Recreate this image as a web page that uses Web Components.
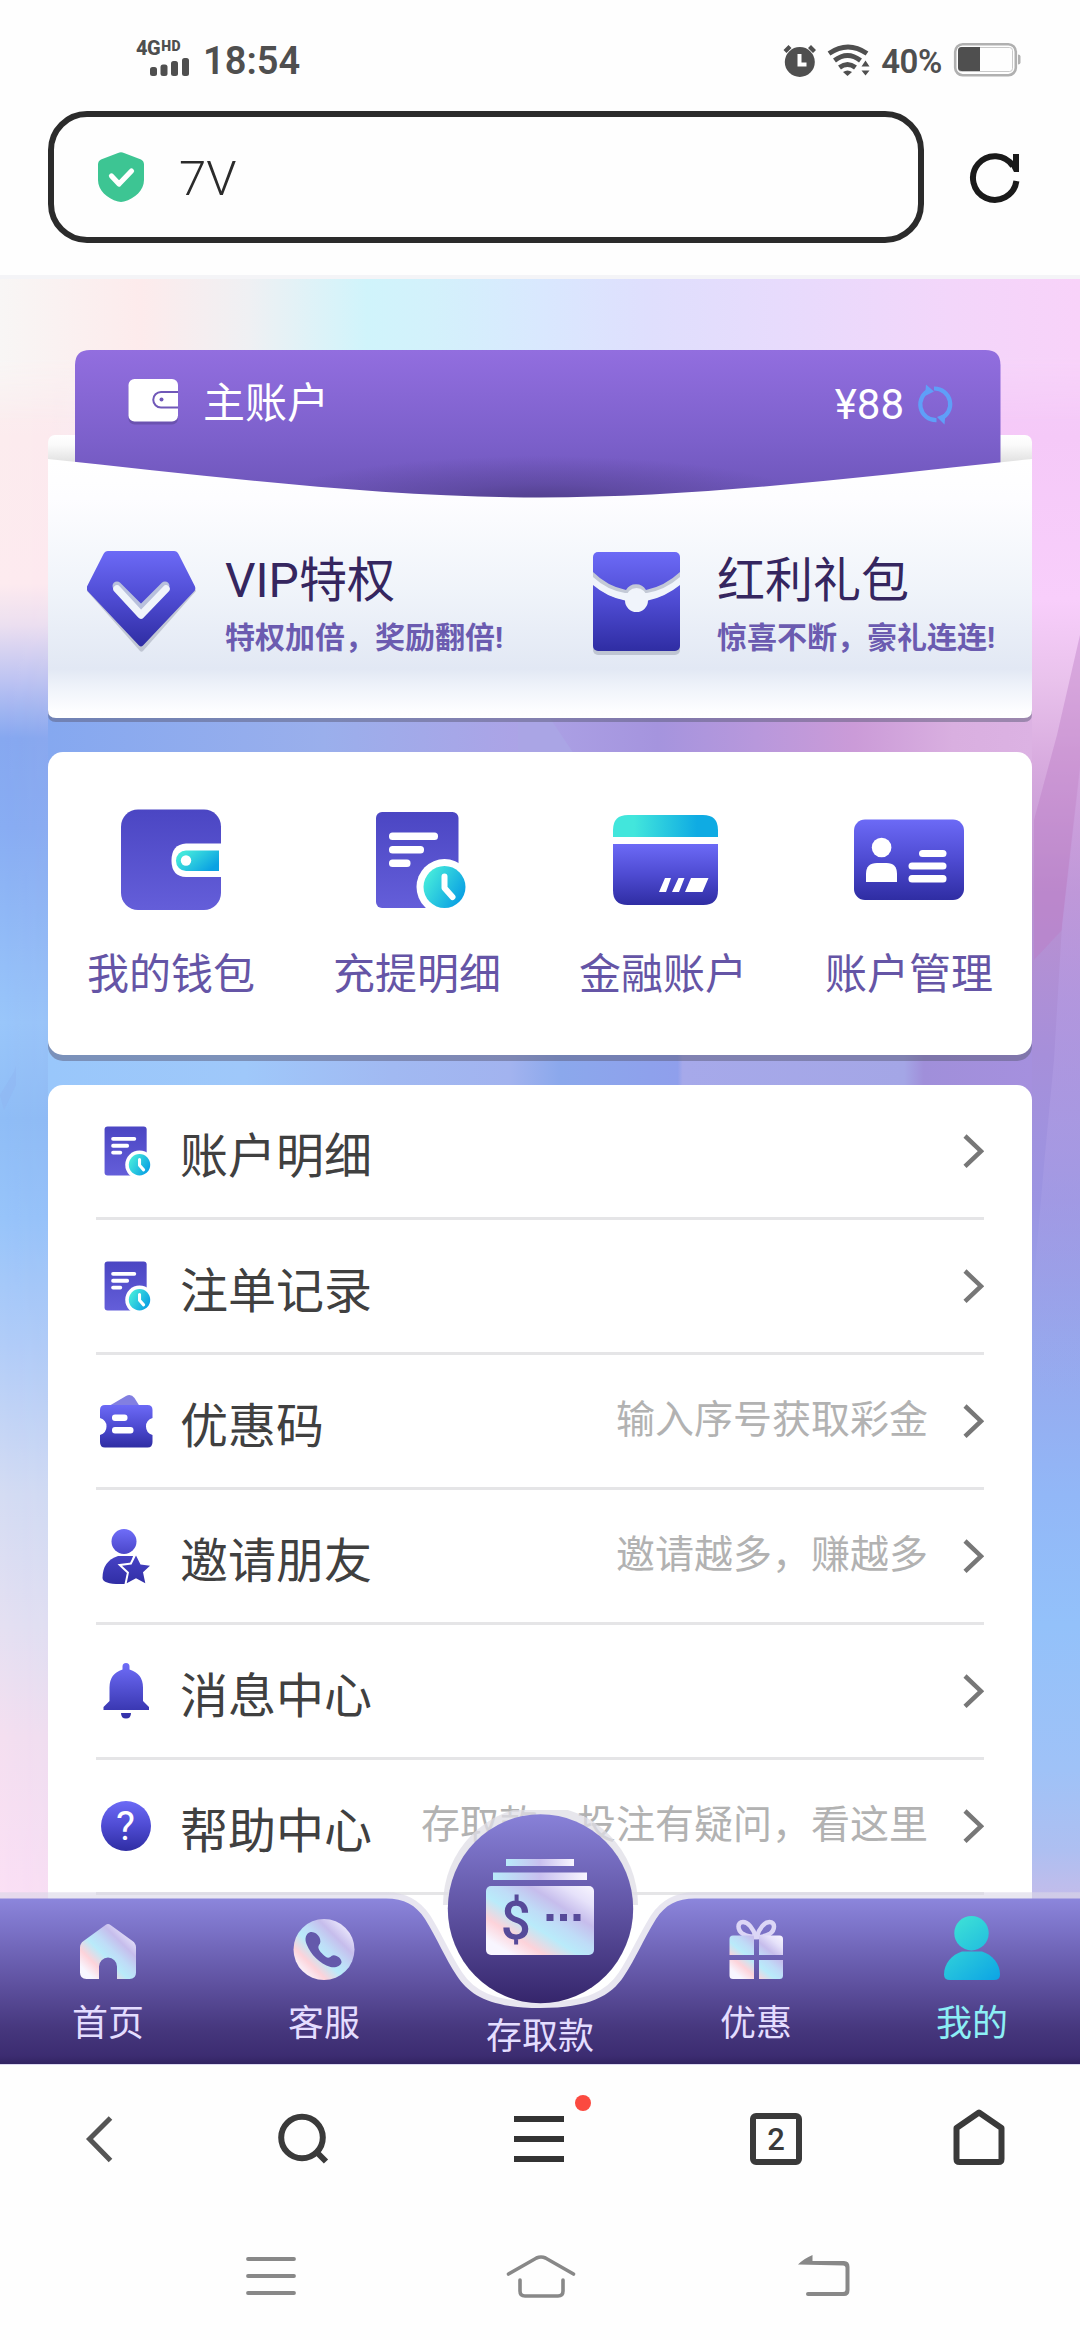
<!DOCTYPE html>
<html lang="zh-CN">
<head>
<meta charset="utf-8">
<title>7V</title>
<style>
html,body{margin:0;padding:0;background:#fff}
body{width:1080px;height:2340px;overflow:hidden;font-family:Roboto,"Noto Sans CJK SC",sans-serif}
</style>
</head>
<body>
<phone-screen></phone-screen>
<script>
const HOLO = `<linearGradient id="h" x1="0" y1="1" x2="1" y2="0"><stop offset="0" stop-color="#f8f6ff"/><stop offset=".12" stop-color="#f8f6ff"/><stop offset=".27" stop-color="#fdd3da"/><stop offset=".43" stop-color="#b9ebfa"/><stop offset=".55" stop-color="#bfdcf7"/><stop offset=".7" stop-color="#c6bdec"/><stop offset=".85" stop-color="#e6e2fa"/><stop offset="1" stop-color="#f8f6ff"/></linearGradient>`;
const BLUE = `<linearGradient id="b" x1="0" y1="0" x2="0" y2="1"><stop offset="0" stop-color="#6c6af6"/><stop offset=".5" stop-color="#4e4bd2"/><stop offset="1" stop-color="#2f2da3"/></linearGradient>`;
const INDIGO = `<linearGradient id="i" x1="0" y1="0" x2="0" y2="1"><stop offset="0" stop-color="#4b46c3"/><stop offset="1" stop-color="#645ed9"/></linearGradient>`;
const TEAL = `<linearGradient id="t" x1="0" y1="0" x2="1" y2=".6"><stop offset="0" stop-color="#47eddb"/><stop offset=".2" stop-color="#42e6dc"/><stop offset="1" stop-color="#0ba2e3"/></linearGradient>`;
const DOC = `<rect x="376" y="812" width="82.500" height="96" rx="6" fill="url(#i)"/><g fill="#fff"><rect x="389" y="832.500" width="49" height="7.500" rx="3.500"/><rect x="389" y="846" width="35" height="7.500" rx="3.500"/><rect x="389" y="859.500" width="21.500" height="7.500" rx="3.500"/><circle cx="444.500" cy="887" r="28"/></g><circle cx="444.500" cy="887" r="21" fill="url(#t)"/><path d="M444.500 876.500V888l8 9" fill="none" stroke="#fff" stroke-width="6" stroke-linecap="round" stroke-linejoin="round"/>`;

/* name: [width, height, viewBox, markup] */
const ICONS = {
  signal:[40,20,'150 57 40 20',`<g fill="#4f4f4f"><rect x="150" y="67" width="7" height="9" rx="2.500"/><rect x="160.500" y="64.500" width="7" height="11.500" rx="2.500"/><rect x="171" y="61" width="7" height="15" rx="2.500"/><rect x="182" y="58" width="7" height="18" rx="2.500"/></g>`],
  alarm:[34,36,'781 43 34 36',`<g fill="#4f4f4f"><circle cx="797.800" cy="62" r="15"/><path d="M781.500 50l5-5 3 3-5 5zM814 50l-5-5-3 3 5 5z"/></g><path d="M797.500 54v10.500h7" fill="none" stroke="#fff" stroke-width="4"/>`],
  wifi:[44,34,'825 43 44 34',`<g fill="none" stroke="#4f4f4f" stroke-width="4.800"><path d="M827 53.500q19-13 38 0"/><path d="M832.500 60.500q13-10 26 0"/><path d="M837.500 67.500q8-6 16 0"/></g><path d="M841 72q4.500-3 9 0l-4.500 4z" fill="#4f4f4f"/><path d="M863.500 60.500l4 6h-8zM863.500 75.500l4-5h-8z" fill="#4f4f4f"/>`],
  battery:[68,36,'953 42 68 36',`<rect x="955.200" y="44.200" width="60.600" height="31" rx="7.500" fill="none" stroke="#b0b0b0" stroke-width="2.600"/><rect x="958.500" y="47.500" width="54" height="24" rx="3" fill="none" stroke="#c9c9c9" stroke-width="1"/><path d="M980 47h-18.500a3.500 3.500 0 0 0-3.500 3.500v17a3.500 3.500 0 0 0 3.500 3.500H980z" fill="#4f4f4f"/><path d="M1018 54.500q2.500 0 2.500 2v6q0 2-2.500 2z" fill="#b0b0b0"/>`],
  shield:[46,50,'98 152 46 50',`<path d="M118 153q3-1.300 6 0l17 6.500q3 1.500 3 5v15.500c0 10-9 18.500-20 21.500q-3 .8-6 0c-11-3-20-11.500-20-21.500V164.500q0-3.500 3-5z" fill="#3dc593"/><path d="M111.500 176l7.500 8 12.500-13" fill="none" stroke="#fff" stroke-width="5.200" stroke-linecap="round" stroke-linejoin="round"/>`],
  reload:[52,52,'969 151 52 52',`<path d="M1013 166a21.800 21.800 0 1 0 3.400 15" fill="none" stroke="#1a1a1a" stroke-width="6"/><path d="M1013 154h6v18h-5l-3-6 2-2z" fill="#1a1a1a"/>`],
  purse:[50,48,'128 380 50 48',`<rect x="128.500" y="384" width="49.500" height="42.500" rx="6" fill="#594598" opacity=".55"/><rect x="128.500" y="381" width="49.500" height="42.500" rx="6" fill="#fff"/><path d="M178 394h-17a7.500 7.500 0 0 0 0 15.500h17" fill="#fff" stroke="#7058b8" stroke-width="2"/><circle cx="161.500" cy="401.500" r="2" fill="#7058b8"/>`],
  sync:[38,42,'916 385 38 42',`<g fill="none" stroke="#5f9ff8" stroke-width="4.200"><path d="M930 391a15.700 15.700 0 0 0 6.500 30.200"/><path d="M934 389.500a15.700 15.700 0 0 1 6.500 30.200"/></g><path d="M926 385.500l8 7-9 4.500zM944.500 425.500l-7.500-7.500 8.500-3.500z" fill="#5f9ff8"/>`],
  gem:[110,104,'87 550 110 104',BLUE+`<path d="M105 555h72l19 36-53 60q-1.500 1.500-3 0l-53-60z" fill="#9a9fb0" opacity=".5"/><path d="M108 551h66q3 0 4.500 3L195 586.500q1 3-1 5L143 645.500q-2 1.800-4 0L88 591.500q-2-2-1-5L103.500 554q1.500-3 4.500-3z" fill="url(#b)"/><path d="M117 586l24 24 24-24" fill="none" stroke="#b8c0dc" stroke-width="9" stroke-linecap="round" stroke-linejoin="round"/><path d="M117 589l24 26 25-26" fill="none" stroke="#f0f4fb" stroke-width="7.500" stroke-linecap="round" stroke-linejoin="round"/>`],
  packet:[88,106,'592 551 88 106',BLUE+`<rect x="593" y="558" width="87" height="98" rx="5" fill="#9a9fb0" opacity=".5"/><rect x="593" y="553" width="87" height="99" rx="5" fill="url(#b)"/><path d="M593 573q14 14 33 18a11.500 11.500 0 0 1 20 0q19-4 34-18v12q-15 13-34 16h-20q-19-3-33-16z" fill="#c3c9d6"/><path d="M593 578q14 13 32 16h22q18-3 33-16v8q-15 12-32 15.500a11.500 11.500 0 0 1-23 0q-18-3.500-32-15.500z" fill="#f0f4fb"/><circle cx="636.500" cy="599.500" r="10.500" fill="#f0f4fb"/>`],
  wallet:[101,102,'121 809 101 102',INDIGO+TEAL+`<rect x="121" y="809.500" width="100" height="100.500" rx="17" fill="url(#i)"/><path d="M222 843.500h-36q-14.500 1-14.500 17t14.500 16.500h36z" fill="#fff"/><path d="M219 850.500h-33a10 10.200 0 0 0 0 20.500h33z" fill="url(#t)"/><circle cx="186" cy="860.500" r="5.200" fill="#fff"/>`],
  bill:[90,98,'376 811 90 98',INDIGO+TEAL+DOC],
  card:[106,91,'613 815 106 91',BLUE+`<linearGradient id="t"><stop offset=".2" stop-color="#42e6dc"/><stop offset=".8" stop-color="#0fabe3"/></linearGradient><path d="M613 837v-7q0-15 15-15h75q15 0 15 15v7z" fill="url(#t)"/><path d="M613 844h105v46.500q0 14.500-14.500 14.500h-76Q613 905 613 890.500z" fill="url(#b)"/><path d="M665 878h6l-5 14h-7zM678.500 878h6l-5.500 14h-7zM691 878h17.500l-6 14H685z" fill="#fff"/>`],
  idcard:[110,82,'854 819 110 82',BLUE+`<rect x="854" y="819.500" width="110" height="80.500" rx="11" fill="url(#b)"/><g fill="#fff"><circle cx="881.600" cy="847.500" r="9.800"/><path d="M866 882v-8q0-11 11-11h9.500q10.500 0 10.500 11v8z"/><rect x="919" y="850" width="27.500" height="7" rx="3.500"/><rect x="908.500" y="862.500" width="38" height="7" rx="3.500"/><rect x="908.500" y="875" width="38" height="7.500" rx="3.500"/></g>`],
  record:[50,50,'370 811 96 98',INDIGO+TEAL+DOC],
  coupon:[54,54,'100 1395 54 54',BLUE+`<path d="M110 1407l17-10q5-2.500 8.500 2l5 8z" fill="#6c68dc" opacity=".85"/><path d="M106 1406h42.500q5 0 5 5v8q-6.500 2-6.500 8.500t6.500 8.500v7q0 5.500-5 5.500H106q-5 0-5-5.500v-7q6.500-2 6.500-8.500T101 1419v-8q0-5 5-5z" fill="none"/><path d="M106 1406h42.500q5 0 5 5v8Q147 1421 147 1427.500T153.500 1436v7q0 5.500-5 5.500H106q-5 0-5-5.500v-7Q107.500 1434 107.500 1427.500Q107.500 1421 101 1419v-8q0-5 5-5z" fill="url(#b)"/><rect x="113" y="1415.500" width="15.500" height="6.500" rx="3" fill="#fff"/><rect x="113" y="1428" width="21.500" height="6.500" rx="3" fill="#fff"/>`],
  friend:[50,57,'102 1527 50 57',`<linearGradient id="g" gradientUnits="userSpaceOnUse" x1="0" y1="1528" x2="0" y2="1583"><stop stop-color="#6f6df8"/><stop offset=".5" stop-color="#4642c4"/><stop offset="1" stop-color="#302ea5"/></linearGradient><g fill="url(#g)"><circle cx="125" cy="1540.500" r="12.500"/><path d="M119 1555h15l-5 28h-8q-17 0-17.500-6 0-17 15.500-22z"/><path id="s" d="M137 1554.500l4.500 9 9.500 1.200-7 6.600 2.300 11-9.300-5-9.300 5 2.300-11-7-6.600 9.500-1.200z" stroke="#fff" stroke-width="4"/><path d="M137 1554.500l4.500 9 9.500 1.200-7 6.600 2.300 11-9.300-5-9.300 5 2.300-11-7-6.600 9.500-1.200z"/></g>`],
  bell:[48,58,'102 1662 48 58',`<linearGradient id="g" gradientUnits="userSpaceOnUse" x1="0" y1="1663" x2="0" y2="1719"><stop stop-color="#6f6df8"/><stop offset="1" stop-color="#302ea5"/></linearGradient><g fill="url(#g)"><path d="M122.500 1666.500q0-3.500 3.500-3.500t3.500 3.500v3q13.500 4 13.500 18v13.500l6 6v3h-45.500v-3l6-6v-13.500q0-14 13-18z"/><path d="M121 1713h10q0 5.500-5 5.500t-5-5.500z"/></g>`],
  help:[52,52,'100 1800 52 52',BLUE+`<circle cx="126" cy="1826" r="25" fill="url(#b)"/><text x="125.500" y="1840" font-size="40" font-family="Roboto,sans-serif" fill="#fff" text-anchor="middle">?</text>`],
  chevron:[22,36,'963 1133 22 36',`<path d="M966 1136l16 15.200-16 15.200" fill="none" stroke="#777" stroke-width="4.500"/>`],
  home:[66,66,'75 1915 66 66',HOLO+`<path d="M105.500 1925q2.500-2 5 0l22 16q3.500 2.500 3.500 6.500v25q0 6.500-6.500 6.500H117v-12.500a9 9 0 0 0-18 0v12.500H86.500q-6.500 0-6.500-6.500v-25q0-4 3.500-6.500z" fill="url(#h)"/>`],
  phone:[66,66,'292 1915 66 66',HOLO+`<circle cx="325" cy="1949.500" r="30.500" fill="url(#h)"/><path d="M311.500 1932c-5 1.500-6 7-4 12 4.500 11 13 19.500 24 23 5 1.200 10-.8 11-4.500.7-4-6.500-9-10-6.500-2.800 3-5.500 1.500-8.500-1.500s-6-6.500-4-9.500c4-4-1-14-8.500-13z" fill="#6459ab"/>`],
  cash:[110,102,'485 1855 110 102',HOLO+`<linearGradient id="h2"><stop stop-color="#b9ebfa"/><stop offset=".5" stop-color="#c9c0ef"/><stop offset="1" stop-color="#f8f6ff"/></linearGradient><rect x="506" y="1859" width="68" height="7" fill="url(#h2)"/><rect x="493" y="1872.500" width="94" height="7.500" fill="url(#h2)"/><rect x="486" y="1886" width="108" height="69" rx="5" fill="url(#h)"/><text x="515.800" y="1939" font-size="53" font-weight="500" font-family="Roboto,sans-serif" fill="#564a99" text-anchor="middle">$</text><path d="M546.500 1914h7v7h-7zM560 1914h7v7h-7zM573.500 1914h7v7h-7z" fill="#564a99"/>`],
  gift:[66,66,'723 1915 66 66',HOLO+`<g fill="none" stroke="#dcd6f6" stroke-width="4.500"><path d="M756 1937c-3-9-8-15-13-15-6 0-6 8 0 12 4 2.500 9 3 13 3z"/><path d="M756.500 1937c3-9 8-15 13-15 6 0 6 8 0 12-4 2.500-9 3-13 3z"/></g><path d="M733 1935.500h21v19.500h-24.500v-16q0-3.500 3.500-3.500zM759 1935.500h20.500q3.500 0 3.500 3.500v16h-24zM729.500 1960H754v19h-21q-3.500 0-3.500-3.500zM759 1960h24v15.500q0 3.500-3.500 3.500H759z" fill="url(#h)"/>`],
  me:[66,66,'939 1915 66 66',`<linearGradient id="g" gradientUnits="userSpaceOnUse" x1="950" y1="1920" x2="995" y2="1980"><stop stop-color="#3fe3d6"/><stop offset="1" stop-color="#0ea6e4"/></linearGradient><g fill="url(#g)"><circle cx="971.500" cy="1933.200" r="17.200"/><path d="M962 1951.500h20c10 3 18 12 18 23q0 5.500-6 5.500h-44q-6 0-6-5.500c0-11 8-20 18-23z"/></g>`],
  back:[50,60,'74 2108 50 60',`<path d="M110.500 2118L89.500 2139l21 21.500" fill="none" stroke="#555" stroke-width="5"/>`],
  search:[54,60,'276 2108 54 60',`<circle cx="302" cy="2137.500" r="20.800" fill="none" stroke="#3a3a3a" stroke-width="6"/><path d="M316.500 2152l9.500 9.500" stroke="#3a3a3a" stroke-width="6"/>`],
  menu:[80,70,'512 2093 80 70',`<path d="M514 2116h50v6h-50zM514 2136h50v6h-50zM514 2156h50v6h-50z" fill="#333"/><circle cx="583" cy="2103" r="8" fill="#fb4a40"/>`],
  tabs:[54,60,'749 2108 54 60',`<rect x="753" y="2116" width="46" height="46" rx="3" fill="none" stroke="#3a3a3a" stroke-width="6"/><text x="776" y="2149.500" font-size="31" font-weight="500" font-family="Roboto,sans-serif" fill="#3a3a3a" text-anchor="middle">2</text>`],
  house:[54,60,'952 2108 54 60',`<path d="M979 2112.500l22.500 15.500v31q0 3-3 3h-39q-3 0-3-3v-31z" fill="none" stroke="#3a3a3a" stroke-width="6" stroke-linejoin="round"/>`],
  recent:[52,44,'245 2255 52 44',`<path d="M248 2260h46M248 2277h46M248 2294h46" stroke="#888" stroke-width="3.800" stroke-linecap="round"/>`],
  launcher:[70,46,'506 2254 70 46',`<path d="M508.500 2274l28-16q4.500-2 9 0l28 16M520 2280v11q0 5 5 5h33q5 0 5-5v-11" fill="none" stroke="#888" stroke-width="3.600" stroke-linecap="round"/>`],
  undo:[54,46,'797 2254 54 46',`<path d="M798 2264.500q6-6 14.500-9.500v6H844q5.500 0 5.500 6v23q0 6-5.500 6h-36q-2 0-2-2t2-2h35q2.500 0 2.500-2.500v-21.500q0-2.500-2.500-2.500z" fill="#888"/>`]
};

const define = (name, html) => customElements.define(name, class extends HTMLElement {
  constructor(){ super(); this.attachShadow({mode:'open'}); }
  connectedCallback(){
    this.shadowRoot.innerHTML = typeof html === 'function' ? html(this) : html;
  }
});

define('ui-icon', el => {
  const [w,h,vb,body] = ICONS[el.getAttribute('name')];
  return `<style>:host{display:block;flex:none;width:${w}px;height:${h}px}svg{display:block}</style><svg width="${w}" height="${h}" viewBox="${vb}">${body}</svg>`;
});

define('status-bar', `<style>
:host{display:flex;height:105px;box-sizing:border-box;padding:40px 59px 0 136px;justify-content:space-between;align-items:flex-start;color:#4f4f4f}
.l,.r{display:flex;align-items:flex-start}
.net{display:flex;flex-direction:column;width:54px}
.g{font:800 20px/17px Roboto;display:flex;letter-spacing:-.5px;height:17px}
.g sup{font:900 14px/12px Roboto;letter-spacing:.6px;margin:0 0 0 1px}
.net ui-icon{margin-left:14px}
.t{font:600 38px/40px Roboto;margin:1px 0 0 13px;letter-spacing:0}
.r ui-icon{margin-top:3px}
.w{margin-left:10px}.p{font:600 33px/40px Roboto;margin:2px 11px 0 10px;letter-spacing:-.4px}
.r .b{margin-top:2px}
</style><div class="l"><div class="net"><span class="g"><span>4G</span><sup>HD</sup></span><ui-icon name="signal"></ui-icon></div><span class="t">18:54</span></div>
<div class="r"><ui-icon name="alarm"></ui-icon><ui-icon class="w" name="wifi"></ui-icon><span class="p">40%</span><ui-icon class="b" name="battery"></ui-icon></div>`);

define('address-bar', `<style>
:host{display:flex;height:170px;box-sizing:border-box;padding:6px 59px 32px 48px;justify-content:space-between;align-items:center}
.f{display:flex;align-items:center;gap:35px;width:876px;height:132px;box-sizing:border-box;border:6px solid #2b2b2b;border-radius:39px;padding-left:44px;font-size:49px;line-height:60px;color:#2b2b2b}
.f span{padding-top:3px;font-weight:350}
</style><div class="f"><ui-icon name="shield"></ui-icon><span><slot></slot></span></div><ui-icon name="reload"></ui-icon>`);

define('account-card', `<style>
:host{display:grid;height:372px;margin:0 48px}
svg,.c{grid-area:1/1}
svg{display:block}
.c{display:flex;flex-direction:column}
.h{display:flex;align-items:center;height:104px;padding:0 78px 0 80px;font-size:42px;line-height:50px;color:#fff}
.h .n{margin:4px 0 0 25px}
.h .m{margin:6px 12px 0 auto}
.h .y{margin-top:5px}
.row{display:flex;margin-top:96px}
</style>
<svg width="984" height="372" viewBox="48 350 984 372"><defs>
<linearGradient id="p" gradientUnits="userSpaceOnUse" x1="0" y1="350" x2="0" y2="500"><stop stop-color="#926edf"/><stop offset=".6" stop-color="#7c60cb"/><stop offset="1" stop-color="#6c55b8"/></linearGradient>
<radialGradient id="d" gradientUnits="userSpaceOnUse" cx="0" cy="0" r="1" gradientTransform="translate(540 502) scale(270 46)"><stop stop-color="#4b3a82" stop-opacity=".85"/><stop offset=".4" stop-color="#4b3a82" stop-opacity=".4"/><stop offset="1" stop-color="#4b3a82" stop-opacity="0"/></radialGradient>
<linearGradient id="k" gradientUnits="userSpaceOnUse" x1="0" y1="435" x2="0" y2="464"><stop stop-color="#fff"/><stop offset=".35" stop-color="#fafafa"/><stop offset="1" stop-color="#dedede"/></linearGradient>
<linearGradient id="f" gradientUnits="userSpaceOnUse" x1="0" y1="460" x2="0" y2="718"><stop stop-color="#fff"/><stop offset=".15" stop-color="#fdfdff"/><stop offset=".5" stop-color="#f0f4fa"/><stop offset=".81" stop-color="#e2e8f4"/><stop offset=".88" stop-color="#eff3fa"/><stop offset=".97" stop-color="#fdfdff"/><stop offset="1" stop-color="#fff"/></linearGradient></defs>
<path d="M48 480v234q0 8 8 8h968q8 0 8-8V480z" fill="#5b5b7a" opacity=".5"/>
<rect x="48" y="435" width="984" height="60" rx="7" fill="url(#k)"/>
<path d="M75 500V365q0-15 15-15h895.500q15 0 15 15v135z" fill="url(#p)"/>
<path d="M75 410h925v90H75z" fill="url(#d)"/>
<path d="M48 459C212 476 376 497.500 540 497.500S868 476 1032 459v251q0 8-8 8H56q-8 0-8-8z" fill="url(#f)"/></svg>
<div class="c"><div class="h"><ui-icon name="purse"></ui-icon><span class="n">主账户</span><span class="m">¥88</span><ui-icon class="y" name="sync"></ui-icon></div>
<div class="row"><perk-item icon="gem" style="--pad:39px;--gap:28px"><span slot="title">VIP特权</span>特权加倍，奖励翻倍!</perk-item><perk-item icon="packet" style="--pad:52px;--gap:37px"><span slot="title">红利礼包</span>惊喜不断，豪礼连连!</perk-item></div></div>`);

define('perk-item', el => `<style>
:host{display:flex;box-sizing:border-box;width:492px;padding-left:var(--pad);gap:var(--gap);white-space:nowrap}
.t{font-size:48px;line-height:60px;color:#35265f;margin-top:1px}
.s{font-size:30px;line-height:44px;font-weight:700;color:#6b5bb0;margin-top:5px}
</style><ui-icon name="${el.getAttribute('icon')}"></ui-icon><div><div class="t"><slot name="title"></slot></div><div class="s"><slot></slot></div></div>`);

define('quick-grid', `<style>
:host{display:grid;grid-template-columns:repeat(4,1fr);height:303px;margin:0 48px;background:#fff;border-radius:15px;box-shadow:0 6px 0 rgba(91,91,122,.5)}
</style><slot></slot>`);
define('quick-item', el => `<style>
:host{display:flex;flex-direction:column;align-items:center;font-size:42px;line-height:50px;color:#6555a6}
.i{height:118px;margin-top:49px;display:flex;align-items:center}
.i ui-icon{margin-left:var(--dx,0)}
.t{margin-top:31px}
</style><div class="i"><ui-icon name="${el.getAttribute('icon')}"></ui-icon></div><div class="t"><slot></slot></div>`);

define('menu-list', `<style>
:host{display:block;height:975px;margin:0 48px;padding:0 48px;background:#fff;border-radius:15px;flex:none}
</style><slot></slot>`);
define('menu-row', el => `<style>
:host{display:flex;align-items:center;height:135px;box-sizing:border-box;border-bottom:3px solid #e5e5e7}
.i{width:60px;display:flex;justify-content:center;flex:none}
.t{font-size:48px;line-height:60px;color:#404040;margin:11px 0 0 24px}
.n{font-size:39px;line-height:50px;color:#b2b2b2;margin:0 34px 2px auto;white-space:nowrap}
</style><span class="i"><ui-icon name="${el.getAttribute('icon')}"></ui-icon></span><span class="t"><slot></slot></span><span class="n">${el.getAttribute('hint')||''}</span><ui-icon name="chevron"></ui-icon>`);

define('tab-bar', `<style>
:host{display:grid;height:254px}
svg,.r{grid-area:1/1}
svg{display:block}
.r{display:flex;align-items:flex-end}
</style>
<svg width="1080" height="254" viewBox="0 1810 1080 254"><defs>
<linearGradient id="a" gradientUnits="userSpaceOnUse" x1="0" y1="1898" x2="0" y2="2064"><stop stop-color="#8c86dc"/><stop offset=".2" stop-color="#7a71c6"/><stop offset=".5" stop-color="#6053a2"/><stop offset=".8" stop-color="#45367c"/><stop offset=".95" stop-color="#3c2c71"/><stop offset="1" stop-color="#322462"/></linearGradient>
<linearGradient id="c" x1="0" y1="0" x2="0" y2="1"><stop stop-color="#8881d8"/><stop offset=".5" stop-color="#6054a4"/><stop offset="1" stop-color="#35256b"/></linearGradient></defs>
<path d="M443 1905a97.500 99 0 0 1 195 0z" fill="#dfdee6" opacity=".75"/>
<path d="M-10 1898.500H386C404 1898.500 416 1905 425 1919C438 1940 445 1958 457 1976C470 1996 492 2008 540.500 2008S611 1996 624 1976C636 1958 643 1940 656 1919C665 1905 677 1898.500 695 1898.500H1090" fill="none" stroke="#d9d6e6" stroke-opacity=".6" stroke-width="12.500"/>
<path d="M0 1898.500H386C404 1898.500 416 1905 425 1919C438 1940 445 1958 457 1976C470 1996 492 2008 540.500 2008S611 1996 624 1976C636 1958 643 1940 656 1919C665 1905 677 1898.500 695 1898.500H1080V2064H0z" fill="url(#a)"/>
<ellipse cx="540.500" cy="1908.700" rx="92.700" ry="94.500" fill="url(#c)"/></svg>
<div class="r"><slot></slot></div>`);
define('tab-item', el => {
  const main = el.hasAttribute('main'), on = el.hasAttribute('active');
  return `<style>
:host{display:flex;flex-direction:column;align-items:center;flex:1;font-size:36px;line-height:40px;color:${on?'#8ceff5':'#e4ddff'};gap:${main?60:23}px;padding-bottom:${main?7:20}px}
</style><ui-icon name="${el.getAttribute('icon')}"></ui-icon><span><slot></slot></span>`;
});

define('page-backdrop', `<style>:host{display:block}svg{display:block}</style>
<svg width="1080" height="1789" viewBox="0 275 1080 1789"><defs>
<linearGradient id="l" gradientUnits="userSpaceOnUse" x1="0" y1="275" x2="0" y2="1900"><stop stop-color="#f9f5f4"/><stop offset=".1" stop-color="#fcecee"/><stop offset=".19" stop-color="#fdebef"/><stop offset=".215" stop-color="#ece0f0"/><stop offset=".25" stop-color="#bcc3f2"/><stop offset=".285" stop-color="#86a8f0"/><stop offset=".34" stop-color="#88adf3"/><stop offset=".46" stop-color="#99c6fa"/><stop offset=".52" stop-color="#8fbdf6"/><stop offset=".58" stop-color="#97c4fa"/><stop offset=".66" stop-color="#b2cdf8"/><stop offset=".75" stop-color="#d4dcf3"/><stop offset=".83" stop-color="#e4e0f2"/><stop offset=".9" stop-color="#f4dff0"/><stop offset="1" stop-color="#fbe0f5"/></linearGradient>
<linearGradient id="r" gradientUnits="userSpaceOnUse" x1="0" y1="275" x2="0" y2="1900"><stop stop-color="#f7d3fa"/><stop offset=".1" stop-color="#f5c9f8"/><stop offset=".2" stop-color="#f8cefb"/><stop offset=".25" stop-color="#e9c2ec"/><stop offset=".3" stop-color="#d8abdf"/><stop offset=".38" stop-color="#bb90d0"/><stop offset=".48" stop-color="#a68fda"/><stop offset=".57" stop-color="#9b94e2"/><stop offset=".65" stop-color="#97a6ec"/><stop offset=".75" stop-color="#92b7f7"/><stop offset=".83" stop-color="#93c1fa"/><stop offset=".92" stop-color="#9fc2f7"/><stop offset=".97" stop-color="#aebff1"/><stop offset="1" stop-color="#c4bcea"/></linearGradient>
<linearGradient id="m"><stop stop-color="#000"/><stop offset="1" stop-color="#fff"/></linearGradient>
<mask id="mk"><rect x="0" y="275" width="1080" height="1789" fill="url(#m)"/></mask>
<linearGradient id="t"><stop stop-color="#f8f6f5"/><stop offset=".13" stop-color="#fdebec"/><stop offset=".23" stop-color="#eff0f3"/><stop offset=".34" stop-color="#d0f4fb"/><stop offset=".4" stop-color="#d3f1fb"/><stop offset=".5" stop-color="#d9e8fe"/><stop offset=".6" stop-color="#dfdffd"/><stop offset=".75" stop-color="#e9dafc"/><stop offset=".88" stop-color="#f3d6fa"/><stop offset="1" stop-color="#f8d2f9"/></linearGradient>
<linearGradient id="v" x1="0" y1="0" x2="0" y2="1"><stop stop-color="#fff"/><stop offset=".55" stop-color="#fff"/><stop offset="1" stop-color="#000"/></linearGradient>
<mask id="tk"><rect x="0" y="275" width="1080" height="150" fill="url(#v)"/></mask>
<linearGradient id="g1"><stop stop-color="#85a8f0"/><stop offset=".28" stop-color="#9aafec"/><stop offset=".48" stop-color="#aca3e6"/><stop offset=".62" stop-color="#a594de"/><stop offset=".72" stop-color="#b898dc"/><stop offset=".82" stop-color="#cb9bd8"/><stop offset=".92" stop-color="#d9afe0"/><stop offset="1" stop-color="#dcb2e3"/></linearGradient>
<linearGradient id="g2"><stop stop-color="#99c7fb"/><stop offset=".2" stop-color="#9fc8fa"/><stop offset=".35" stop-color="#a1b9f2"/><stop offset=".47" stop-color="#a2b3ef"/><stop offset=".52" stop-color="#8ba8ec"/><stop offset=".64" stop-color="#8f9fec"/><stop offset=".645" stop-color="#a6a9ea"/><stop offset=".87" stop-color="#a4a6e6"/><stop offset=".89" stop-color="#a08fda"/><stop offset="1" stop-color="#a590de"/></linearGradient>
<linearGradient id="fb" gradientUnits="userSpaceOnUse" x1="0" y1="780" x2="0" y2="1400"><stop stop-color="#cf9fdc"/><stop offset=".35" stop-color="#b59be2"/><stop offset=".6" stop-color="#ab9de4"/><stop offset="1" stop-color="#98a7ec" stop-opacity="0"/></linearGradient>
</defs>
<rect y="275" width="1080" height="1789" fill="url(#l)"/>
<rect y="275" width="1080" height="1789" fill="url(#r)" mask="url(#mk)"/>
<rect x="1000" y="275" width="80" height="1789" fill="url(#r)"/>
<rect y="275" width="1080" height="150" fill="url(#t)" mask="url(#tk)"/>
<rect x="48" y="715" width="984" height="45" fill="url(#g1)"/><path d="M548 715l30 45h-60V715z" fill="#aaa5e5"/>
<rect x="48" y="1040" width="984" height="60" fill="url(#g2)"/>
<path d="M1080 635L1057 735 1034 820V960L1062 930 1080 770z" fill="#bd7cc6" opacity=".42"/>
<path d="M1080 765L1062 925 1054 1060 1044 1165 1034 1280V1400H1080z" fill="url(#fb)" opacity=".6"/>
<path d="M0 1095L14 1072 16 1066V1085L4 1110z" fill="#8fb6f2" opacity=".5"/>
<rect y="275" width="1080" height="4" fill="#f4f4f7"/></svg>`);

define('browser-bar', `<style>
:host{display:flex;height:152px;box-sizing:border-box;border-top:1px solid #dcd8f0;padding:43px 0 0 74px}
.s{margin-left:152px}.m{margin:-15px 0 0 182px}.t{margin-left:157px}.h{margin-left:149px}
</style><ui-icon name="back"></ui-icon><ui-icon class="s" name="search"></ui-icon><ui-icon class="m" name="menu"></ui-icon><ui-icon class="t" name="tabs"></ui-icon><ui-icon class="h" name="house"></ui-icon>`);
define('system-nav', `<style>
:host{display:flex;align-items:flex-start;height:124px;box-sizing:border-box;padding:38px 0 0 245px}
ui-icon:first-child{margin-top:1px}
.l{margin-left:209px}.u{margin-left:221px}
</style><ui-icon name="recent"></ui-icon><ui-icon class="l" name="launcher"></ui-icon><ui-icon class="u" name="undo"></ui-icon>`);

define('phone-screen', `<style>
:host{display:flex;flex-direction:column;width:1080px;height:2340px;background:#fefefe;overflow:hidden}
.page{display:grid;height:1789px;overflow:hidden;grid-template-rows:1789px}
.page>*{grid-area:1/1}
.content{display:flex;flex-direction:column;padding-top:75px;box-sizing:border-box;height:1789px;overflow:hidden}
quick-grid{margin-top:30px;flex:none}
menu-list{margin-top:30px}
account-card{flex:none}
tab-bar{align-self:end}
</style>
<status-bar></status-bar><address-bar>7V</address-bar>
<div class="page"><page-backdrop></page-backdrop>
<div class="content"><account-card></account-card>
<quick-grid><quick-item icon="wallet">我的钱包</quick-item><quick-item icon="bill" style="--dx:8px">充提明细</quick-item><quick-item icon="card" style="--dx:5px">金融账户</quick-item><quick-item icon="idcard">账户管理</quick-item></quick-grid>
<menu-list><menu-row icon="record">账户明细</menu-row><menu-row icon="record">注单记录</menu-row><menu-row icon="coupon" hint="输入序号获取彩金">优惠码</menu-row><menu-row icon="friend" hint="邀请越多，赚越多">邀请朋友</menu-row><menu-row icon="bell">消息中心</menu-row><menu-row icon="help" hint="存取款、投注有疑问，看这里">帮助中心</menu-row></menu-list></div>
<tab-bar><tab-item icon="home">首页</tab-item><tab-item icon="phone">客服</tab-item><tab-item icon="cash" main>存取款</tab-item><tab-item icon="gift">优惠</tab-item><tab-item icon="me" active>我的</tab-item></tab-bar></div>
<browser-bar></browser-bar><system-nav></system-nav>`);
</script>
</body>
</html>
